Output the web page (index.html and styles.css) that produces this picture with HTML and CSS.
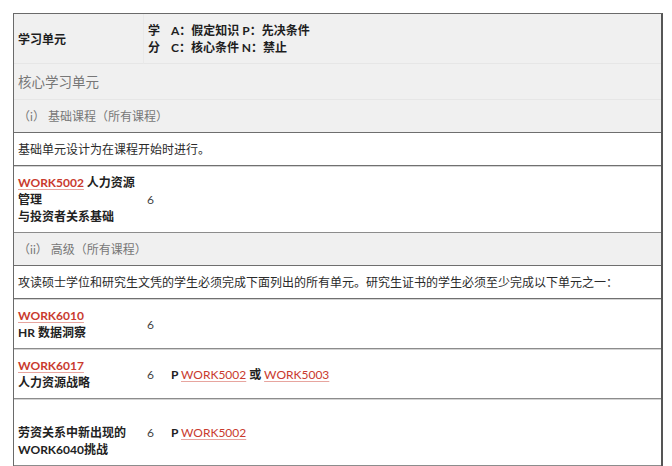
FILE: index.html
```html
<!DOCTYPE html>
<html lang="zh-CN">

<head>
  <meta charset="UTF-8">
  <meta name="viewport" content="width=device-width, initial-scale=1.0">
  <title>学习单元</title>
  <link rel="stylesheet" href="styles.css">
</head>

<body>
  <table class="unit-table">
    <colgroup>
      <col class="col-unit">
      <col class="col-credit">
      <col class="col-req">
    </colgroup>
    <thead>
      <tr class="head-row">
        <th>学习单元</th>
        <th class="credit-head">学<br>分</th>
        <th>A：假定知识 P：先决条件<br>C：核心条件 N：禁止</th>
      </tr>
    </thead>
    <tbody>
      <tr class="group-row">
        <td colspan="3">核心学习单元</td>
      </tr>
      <tr class="section-row">
        <td colspan="3">（i） 基础课程（所有课程）</td>
      </tr>
      <tr class="note-row">
        <td colspan="3">基础单元设计为在课程开始时进行。</td>
      </tr>
      <tr class="unit-row">
        <td class="unit-name"><a href="#">WORK5002</a> 人力资源<br>管理<br>与投资者关系基础</td>
        <td class="credit">6</td>
        <td class="req"></td>
      </tr>
      <tr class="section-row">
        <td colspan="3">（ii） 高级（所有课程）</td>
      </tr>
      <tr class="note-row">
        <td colspan="3">攻读硕士学位和研究生文凭的学生必须完成下面列出的所有单元。研究生证书的学生必须至少完成以下单元之一：</td>
      </tr>
      <tr class="unit-row">
        <td class="unit-name"><a href="#">WORK6010</a><br>HR 数据洞察</td>
        <td class="credit">6</td>
        <td class="req"></td>
      </tr>
      <tr class="unit-row">
        <td class="unit-name"><a href="#">WORK6017</a><br>人力资源战略</td>
        <td class="credit">6</td>
        <td class="req">P <a href="#">WORK5002</a> 或 <a href="#">WORK5003</a></td>
      </tr>
      <tr class="unit-row">
        <td class="unit-name"><br>劳资关系中新出现的<br>WORK6040挑战</td>
        <td class="credit">6</td>
        <td class="req">P <a href="#">WORK5002</a></td>
      </tr>
    </tbody>
  </table>
</body>

</html>
```

FILE: styles.css
```css
* {
  margin: 0;
  padding: 0;
  box-sizing: border-box;
}

body {
  font-family: 'Lato', 'Noto Sans CJK SC', sans-serif;
  font-size: 12px;
  line-height: 17px;
  color: #222;
  background: #fff;
  padding: 13px 0 0 13px;
}

.unit-table {
  width: 650px;
  border-collapse: separate;
  border-spacing: 0;
  border: 1px solid #6a6a6a;
  border-right: 2px solid #555;
}

.col-unit {
  width: 129px;
}

.col-credit {
  width: 24px;
}

th, td {
  padding: 8px 4px 7px;
  text-align: left;
  vertical-align: middle;
}

.head-row th {
  background: #f0f0f0;
  font-weight: 700;
  color: #1e1e1e;
  border-bottom: 1px solid #e6e6e6;
}

.credit-head {
  border-left: 1px solid #e9e9e9;
}

.group-row td {
  background: #f0f0f0;
  font-size: 13.5px;
  line-height: 20px;
  color: #777;
  border-bottom: 1px solid #e6e6e6;
}

.section-row td {
  background: #f0f0f0;
  color: #777;
  border-bottom: 1px solid #6e6e6e;
}

.note-row td {
  color: #2a2a2a;
  border-bottom: 1px solid #707070;
}

.unit-row td {
  height: 50px;
  border-bottom: 1px solid #8c8c8c;
  box-shadow: inset 0 1px 0 #d4d4d4;
}

.unit-name {
  font-weight: 700;
}

.credit {
  color: #444;
}

.req {
  font-weight: 700;
}

a {
  color: #c93a2e;
  text-decoration: underline;
  text-decoration-color: #e7a59f;
  text-underline-offset: 2px;
}

.req a {
  font-weight: 400;
}
```
